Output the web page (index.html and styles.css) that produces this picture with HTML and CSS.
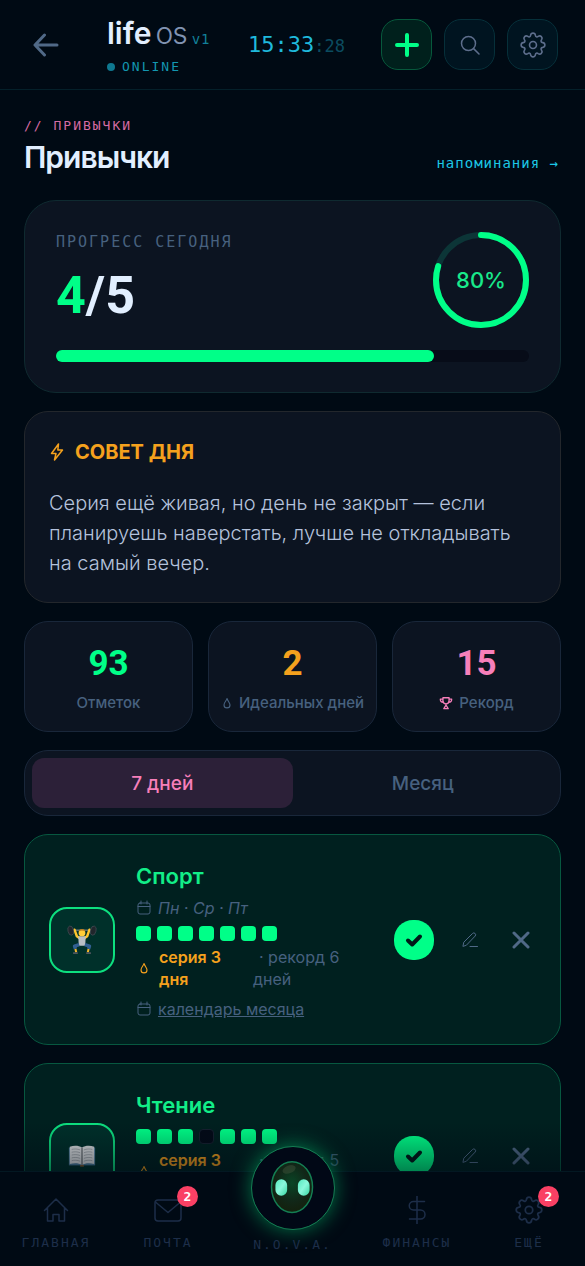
FILE: index.html
```html
<!DOCTYPE html>
<html lang="ru">
<head>
  <meta charset="UTF-8">
  <meta name="viewport" content="width=device-width, initial-scale=1.0">
  <title>life os - Привычки</title>
  <link rel="stylesheet" href="styles.css">
</head>
<body>
  <!-- Shared icons -->
  <svg class="sprite" aria-hidden="true">
    <symbol id="i-gear" viewBox="0 0 24 24">
      <path d="M9.800 3 C10.200 .4 13.800 .4 14.200 3 C14.400 4.600 15.600 5 16.800 4.100 C18.900 2.600 21.400 5.100 19.900 7.200 C19 8.400 19.400 9.600 21 9.800 C23.600 10.200 23.600 13.800 21 14.200 C19.400 14.400 19 15.600 19.900 16.800 C21.400 18.900 18.900 21.400 16.800 19.900 C15.600 19 14.400 19.400 14.200 21 C13.800 23.600 10.200 23.600 9.800 21 C9.600 19.400 8.400 19 7.200 19.900 C5.100 21.400 2.600 18.900 4.100 16.800 C5 15.600 4.600 14.400 3 14.200 C.4 13.800 .4 10.200 3 9.800 C4.600 9.600 5 8.400 4.100 7.200 C2.600 5.100 5.100 2.600 7.200 4.100 C8.400 5 9.600 4.600 9.800 3 Z"/>
      <circle cx="12" cy="12" r="3.200"/>
    </symbol>
    <symbol id="i-drop" viewBox="0 0 16 16">
      <path d="M8 2 C7.500 5 4 7 4 10.500 A4 4 0 0 0 12 10.500 C12 8 9 5.500 8 2 Z"/>
    </symbol>
    <symbol id="i-calendar" viewBox="0 0 16 16">
      <rect x="2" y="3" width="12" height="11" rx="2"/>
      <path d="M2 6.500h12M5 1v3M11 1v3"/>
    </symbol>
    <symbol id="i-pencil" viewBox="0 0 18 18">
      <path d="M2 15l.8-3.800L11.500 2.500a1.800 1.800 0 0 1 2.600 2.600L5.600 14zM9 15.500h7.500"/>
    </symbol>
    <symbol id="i-check" viewBox="0 0 18 18"><path d="M3 9.500l4.200 4L15 5.500"/></symbol>
    <symbol id="i-cross" viewBox="0 0 18 18"><path d="M2 2l14 14M16 2L2 16"/></symbol>
  </svg>

  <header class="topbar">
    <button class="back" aria-label="Назад">
      <svg class="icon" viewBox="0 0 26 26"><path d="M24 13H3M11.500 3L2 13l9.500 10"/></svg>
    </button>
    <div class="brand">
      <div class="brand-name"><b>life</b><span class="os">os</span><span class="version">v1</span></div>
      <div class="online">ONLINE</div>
    </div>
    <time class="clock">15:33<span>:28</span></time>
    <div class="tools">
      <button class="tool add" aria-label="Добавить">
        <svg class="icon" viewBox="0 0 24 24"><path d="M12 2v20M2 12h20"/></svg>
      </button>
      <button class="tool" aria-label="Поиск">
        <svg class="icon search-icon" viewBox="0 0 20 20"><circle cx="8.500" cy="8.500" r="7"/><path d="M13.600 13.600L19 19"/></svg>
      </button>
      <button class="tool" aria-label="Настройки">
        <svg class="icon"><use href="#i-gear"/></svg>
      </button>
    </div>
  </header>

  <main class="content">
    <div class="page-head">
      <div>
        <p class="kicker">// ПРИВЫЧКИ</p>
        <h1>Привычки</h1>
      </div>
      <a class="reminders" href="#reminders">напоминания →</a>
    </div>

    <section class="card progress">
      <div class="progress-top">
        <div>
          <p class="progress-label">ПРОГРЕСС СЕГОДНЯ</p>
          <p class="progress-count"><span>4</span>/5</p>
        </div>
        <div class="ring">
          <svg viewBox="0 0 96 96">
            <circle class="ring-track" cx="48" cy="48" r="45"/>
            <circle class="ring-value" cx="48" cy="48" r="45" pathLength="100"/>
          </svg>
          <span>80%</span>
        </div>
      </div>
      <div class="bar"><div class="bar-fill" style="width: 80%"></div></div>
    </section>

    <section class="card tip">
      <h2>
        <svg class="icon" viewBox="0 0 16 20"><path d="M9.500 2L2.500 11.500h4.500L5.500 18 13.500 8H8.800z"/></svg>
        СОВЕТ ДНЯ
      </h2>
      <p>Серия ещё живая, но день не закрыт — если планируешь наверстать, лучше не откладывать на самый вечер.</p>
    </section>

    <section class="stats">
      <div class="card stat green">
        <strong>93</strong>
        <p>Отметок</p>
      </div>
      <div class="card stat orange">
        <strong>2</strong>
        <p><svg class="icon"><use href="#i-drop"/></svg>Идеальных дней</p>
      </div>
      <div class="card stat pink">
        <strong>15</strong>
        <p><svg class="icon trophy" viewBox="0 0 16 16"><path d="M4.500 2h7v3.500a3.500 3.500 0 0 1-7 0zM4.500 3.500h-3c0 2.500 1 3.800 3.300 3.800M11.500 3.500h3c0 2.500-1 3.800-3.300 3.800M8 9v2M8 10.500L5.500 14.500h5z"/></svg>Рекорд</p>
      </div>
    </section>

    <div class="card tabs">
      <button class="tab active">7 дней</button>
      <button class="tab">Месяц</button>
    </div>

    <article class="card habit">
      <div class="habit-icon">
        <svg viewBox="0 0 32 32">
          <path d="M4 5.500h24" stroke="#7d8790" stroke-width="1.200"/>
          <path d="M8 5l2.500 7 3 2M24 5l-2.500 7-3 2" fill="none" stroke="#ffc52e" stroke-width="2.600" stroke-linecap="round" stroke-linejoin="round"/>
          <g fill="#20262c" stroke="#4d565e" stroke-width=".600">
            <ellipse cx="4" cy="6" rx="3" ry="5" transform="rotate(-14 4 6)"/>
            <ellipse cx="28" cy="6" rx="3" ry="5" transform="rotate(14 28 6)"/>
          </g>
          <path d="M12 12h8l-.6 10h-6.800z" fill="#b9bec4"/>
          <path d="M13 21l-5 1.500 1 3M19 21l5 1.500-1 3" fill="none" stroke="#315f91" stroke-width="3.600" stroke-linejoin="round"/>
          <path d="M9 25.500l.8 3.500M23 25.500l-.8 3.500" stroke="#f1b62b" stroke-width="2.200"/>
          <path d="M6.500 30h5M20.500 30h5" stroke="#4d565e" stroke-width="2"/>
          <circle cx="16" cy="8.500" r="3.600" fill="#ffcd39"/>
          <path d="M12.500 7c0-3.500 7-3.500 7 0-2-1.500-5-1.500-7 0z" fill="#b97a20"/>
        </svg>
      </div>
      <div class="habit-info">
        <h3>Спорт</h3>
        <p class="schedule"><svg class="icon"><use href="#i-calendar"/></svg><em>Пн · Ср · Пт</em></p>
        <div class="days"><i></i><i></i><i></i><i></i><i></i><i></i><i></i></div>
        <p class="streak">
          <svg class="icon"><use href="#i-drop"/></svg>
          <b>серия 3 дня</b>
          <span class="record">· рекорд 6 дней</span>
        </p>
        <p class="schedule"><svg class="icon"><use href="#i-calendar"/></svg><a href="#month">календарь месяца</a></p>
      </div>
      <div class="habit-actions">
        <button class="done" aria-label="Отметить"><svg class="icon"><use href="#i-check"/></svg></button>
        <button class="edit" aria-label="Изменить"><svg class="icon"><use href="#i-pencil"/></svg></button>
        <button class="remove" aria-label="Удалить"><svg class="icon"><use href="#i-cross"/></svg></button>
      </div>
    </article>

    <article class="card habit">
      <div class="habit-icon">
        <svg viewBox="0 0 32 32">
          <path d="M2 7h28v19H2z" fill="#4d7d9e"/>
          <path d="M3 6c5-1.500 10-1 13 1 3-2 8-2.500 13-1v18.500c-5-1.200-10-.8-13 1-3-1.800-8-2.200-13-1z" fill="#dfe1e3"/>
          <path d="M16 7v18.500" stroke="#6b7075" stroke-width="1.400"/>
          <path d="M5 9c3-.8 6-.6 9 .5M5 12c3-.8 6-.6 9 .5M5 15c3-.8 6-.6 9 .5M5 18c3-.8 6-.6 9 .5M5 21c3-.8 6-.6 9 .5M27 9c-3-.8-6-.6-9 .5M27 12c-3-.8-6-.6-9 .5M27 15c-3-.8-6-.6-9 .5M27 18c-3-.8-6-.6-9 .5M27 21c-3-.8-6-.6-9 .5" fill="none" stroke="#9a9fa4" stroke-width=".800"/>
          <path d="M14 26.500h4" stroke="#8a5a2c" stroke-width="1.600"/>
        </svg>
      </div>
      <div class="habit-info">
        <h3>Чтение</h3>
        <div class="days"><i></i><i></i><i></i><i class="missed"></i><i></i><i></i><i></i></div>
        <p class="streak">
          <svg class="icon"><use href="#i-drop"/></svg>
          <b>серия 3 дня</b>
          <span class="record">· рекорд 5 дней</span>
        </p>
        <p class="schedule"><svg class="icon"><use href="#i-calendar"/></svg><a href="#month">календарь месяца</a></p>
      </div>
      <div class="habit-actions">
        <button class="done" aria-label="Отметить"><svg class="icon"><use href="#i-check"/></svg></button>
        <button class="edit" aria-label="Изменить"><svg class="icon"><use href="#i-pencil"/></svg></button>
        <button class="remove" aria-label="Удалить"><svg class="icon"><use href="#i-cross"/></svg></button>
      </div>
    </article>
  </main>

  <nav class="bottom-nav">
    <a href="#home">
      <span class="nav-icon"><svg class="icon" viewBox="0 0 28 28"><path d="M2.500 14.500L14 3l11.500 11.500M5.500 12v13H11v-6.500h6V25h5.500V12"/></svg></span>
      ГЛАВНАЯ
    </a>
    <a href="#mail">
      <span class="nav-icon"><svg class="icon" viewBox="0 0 28 28"><rect x="1" y="4" width="26" height="21" rx="3"/><path d="M2 6.500l12 10L26 6.500"/></svg><span class="badge">2</span></span>
      ПОЧТА
    </a>
    <a class="nova" href="#nova">
      <span class="orb">
        <svg viewBox="0 0 84 84">
          <defs>
            <radialGradient id="face" cx=".5" cy=".42" r=".6">
              <stop offset="0" stop-color="#0a4526"/>
              <stop offset=".6" stop-color="#112718"/>
              <stop offset="1" stop-color="#14200c"/>
            </radialGradient>
            <linearGradient id="eye" x1="0" y1="0" x2="1" y2="1">
              <stop offset="0" stop-color="#55e8bd"/>
              <stop offset=".5" stop-color="#8bf8dc"/>
              <stop offset="1" stop-color="#36d6a0"/>
            </linearGradient>
          </defs>
          <ellipse cx="41" cy="41" rx="21" ry="26" fill="url(#face)" stroke="#147e53" stroke-width="1.500"/>
          <ellipse cx="38" cy="23" rx="7" ry="4" fill="#4b5940" opacity=".4" transform="rotate(-20 38 23)"/>
          <rect x="24" y="33" width="12" height="17" rx="6" fill="url(#eye)"/>
          <rect x="47" y="33" width="12" height="17" rx="6" fill="url(#eye)"/>
        </svg>
      </span>
      N.O.V.A.
    </a>
    <a href="#finance">
      <span class="nav-icon"><svg class="icon" viewBox="0 0 28 28"><path d="M14 0v28M21.500 5.500H10.500a4.200 4.200 0 0 0 0 8.500h7a4.500 4.500 0 0 1 0 9H6.500"/></svg></span>
      ФИНАНСЫ
    </a>
    <a href="#more">
      <span class="nav-icon"><svg class="icon"><use href="#i-gear"/></svg><span class="badge">2</span></span>
      ЕЩЁ
    </a>
  </nav>
</body>
</html>
```

FILE: styles.css
```css
:root {
  --bg: #000a14;
  --card: #0c1421;
  --green: #00ff88;
  --orange: #f5a11d;
  --pink: #f77fba;
  --muted: #47617f;
  --light: #e2efff;
  --sans: Inter, "Noto Sans", sans-serif;
  --mono: "DejaVu Sans Mono", monospace;
}
* {
  box-sizing: border-box;
}
body {
  margin: 0;
  height: 100vh;
  display: flex;
  flex-direction: column;
  overflow: hidden;
  background: var(--bg);
  color: var(--light);
  font-family: var(--sans);
}
h1, h2, h3, p {
  margin: 0;
}
button {
  padding: 0;
  border: none;
  background: none;
  font-family: inherit;
  cursor: pointer;
}
a {
  color: inherit;
}
.sprite {
  display: none;
}
.icon {
  display: block;
  flex: none;
  fill: none;
  stroke: currentColor;
  stroke-width: 1.5;
  stroke-linecap: round;
  stroke-linejoin: round;
}

/* Top bar */
.topbar {
  flex: none;
  display: flex;
  align-items: center;
  height: 90px;
  padding: 0 27px 0 24px;
  border-bottom: 1px solid #04202a;
}
.back {
  display: grid;
  place-items: center;
  width: 44px;
  height: 44px;
  color: #506987;
}
.back .icon {
  width: 26px;
  height: 26px;
  stroke-width: 3;
}
.brand {
  margin-left: 39px;
}
.brand-name {
  display: flex;
  align-items: baseline;
  font-size: 30px;
  line-height: 38px;
}
.brand-name b {
  font-weight: 600;
}
.os {
  margin-left: 4px;
  color: #8193b1;
  font-weight: 300;
  letter-spacing: -1px;
}
.version {
  margin-left: 5px;
  color: #12809a;
  font-family: var(--mono);
  font-size: 14px;
  letter-spacing: 1px;
}
.online {
  display: flex;
  align-items: center;
  gap: 7px;
  color: #1397b0;
  font-family: var(--mono);
  font-size: 13px;
  line-height: 18px;
  letter-spacing: 2px;
}
.online::before {
  content: "";
  width: 8px;
  height: 8px;
  border-radius: 50%;
  background: #0e7890;
}
.clock {
  margin: 0 36px 0 auto;
  color: #1fb9dc;
  font-family: var(--mono);
  font-size: 22px;
  white-space: nowrap;
}
.clock span {
  color: #0b4c60;
  font-size: 17px;
}
.tools {
  display: flex;
  gap: 12px;
}
.tool {
  display: grid;
  place-items: center;
  width: 51px;
  height: 51px;
  border: 1px solid #06303a;
  border-radius: 17px;
  background: #001420;
  color: #5d6e8c;
}
.tool .icon {
  width: 26px;
  height: 26px;
}
.tool .search-icon {
  width: 20px;
  height: 20px;
}
.add {
  border-color: #07593c;
  background: #00201c;
  color: var(--green);
}
.add .icon {
  width: 24px;
  height: 24px;
  stroke-width: 4;
}

/* Page */
.content {
  flex: 1;
  min-height: 0;
  padding: 27px 24px 0;
  overflow-y: auto;
  scrollbar-width: none;
}
.page-head {
  display: flex;
  justify-content: space-between;
  align-items: flex-end;
  margin-bottom: 21px;
}
.kicker {
  color: #d56ba3;
  font-family: var(--mono);
  font-size: 13px;
  line-height: 18px;
  letter-spacing: 2px;
}
h1 {
  font-size: 30px;
  font-weight: 600;
  line-height: 44px;
  letter-spacing: -1px;
}
.reminders {
  margin: 0 2px 6px 0;
  color: #1cc8e6;
  font-family: var(--mono);
  font-size: 14px;
  line-height: 20px;
  letter-spacing: 1px;
  text-decoration: none;
}
.card {
  margin-bottom: 18px;
  border: 1px solid #19273a;
  border-radius: 24px;
  background: var(--card);
}

/* Progress */
.progress {
  padding: 31px 31px 30px;
  border-color: #0f2a30;
  border-radius: 32px;
}
.progress-top {
  display: flex;
  justify-content: space-between;
  margin-bottom: 22px;
}
.progress-label {
  color: var(--muted);
  font-family: var(--mono);
  font-size: 15px;
  line-height: 20px;
  letter-spacing: 2px;
}
.progress-count {
  margin-top: 14px;
  font-family: Roboto, sans-serif;
  font-size: 52px;
  font-weight: 700;
  line-height: 60px;
}
.progress-count span {
  color: var(--green);
}
.ring {
  display: grid;
  width: 96px;
  height: 96px;
}
.ring svg, .ring span {
  grid-area: 1 / 1;
}
.ring span {
  place-self: center;
  color: #18e98b;
  font-size: 22px;
  font-weight: 500;
}
.ring circle {
  fill: none;
  stroke-width: 6;
}
.ring-track {
  stroke: #0c3537;
}
.ring-value {
  stroke: var(--green);
  stroke-linecap: round;
  stroke-dasharray: 80 100;
  transform: rotate(-90deg);
  transform-origin: center;
}
.bar {
  height: 12px;
  border-radius: 6px;
  background: #070c18;
}
.bar-fill {
  height: 100%;
  border-radius: 6px;
  background: var(--green);
}

/* Tip */
.tip {
  padding: 24px;
  border-color: #23272c;
}
.tip h2 {
  display: flex;
  align-items: center;
  gap: 10px;
  color: var(--orange);
  font-size: 20px;
  font-weight: 700;
  line-height: 32px;
}
.tip h2 .icon {
  width: 16px;
  height: 20px;
}
.tip p {
  margin-top: 20px;
  color: #b4c2dc;
  font-size: 20px;
  font-weight: 300;
  line-height: 30px;
}

/* Stats */
.stats {
  display: grid;
  grid-template-columns: repeat(3, 1fr);
  gap: 15px;
  margin-bottom: 18px;
}
.stat {
  margin: 0;
  padding: 22px 4px 16px;
  text-align: center;
}
.stat strong {
  display: block;
  font-family: Roboto, sans-serif;
  font-size: 35px;
  line-height: 40px;
}
.stat p {
  display: flex;
  justify-content: center;
  align-items: center;
  gap: 6px;
  margin-top: 7px;
  color: var(--muted);
  font-size: 15px;
  font-weight: 500;
  line-height: 24px;
  white-space: nowrap;
}
.stat .icon {
  width: 12px;
  height: 12px;
}
.stat .trophy {
  width: 14px;
  height: 14px;
  color: var(--pink);
}
.green strong {
  color: var(--green);
}
.orange strong {
  color: var(--orange);
}
.pink strong {
  color: var(--pink);
}

/* Period tabs */
.tabs {
  display: grid;
  grid-template-columns: 1fr 1fr;
  padding: 7px;
}
.tab {
  height: 50px;
  border-radius: 12px;
  color: var(--muted);
  font-size: 19px;
  font-weight: 500;
}
.active {
  background: #2c2038;
  color: var(--pink);
}

/* Habits */
.habit {
  display: flex;
  align-items: center;
  padding: 24px;
  border-color: #075840;
  background: #00201f;
}
.habit-icon {
  flex: none;
  display: grid;
  place-items: center;
  width: 66px;
  height: 66px;
  border: 2px solid #0ddf7f;
  border-radius: 18px;
  background: #00302a;
}
.habit-icon svg {
  width: 30px;
  height: 30px;
}
.habit-info {
  flex: 1;
  margin-left: 21px;
  color: var(--muted);
  font-size: 16px;
  line-height: 22px;
}
.habit h3 {
  color: #12ee88;
  font-size: 22px;
  font-weight: 600;
  line-height: 34px;
}
.schedule {
  display: flex;
  align-items: center;
  gap: 6px;
  margin-top: 4px;
}
.schedule .icon {
  width: 16px;
  height: 16px;
  stroke-width: 1;
}
.days {
  display: flex;
  gap: 6px;
  margin: 7px 0 5px;
}
.days i {
  width: 15px;
  height: 15px;
  border-radius: 4px;
  background: var(--green);
}
.days .missed {
  border: 1px solid #16202f;
  background: #030a17;
}
.streak {
  display: flex;
  align-items: center;
  margin-bottom: 8px;
}
.streak .icon {
  width: 12px;
  height: 12px;
  margin: 0 9px 0 2px;
  color: var(--orange);
}
.streak b {
  width: 76px;
  margin-right: 18px;
  color: var(--orange);
  font-weight: 600;
}
.record {
  width: 100px;
  text-indent: 6px;
}
.habit-actions {
  display: flex;
  align-items: center;
  gap: 12px;
  margin-right: -4px;
}
.habit-actions button {
  display: grid;
  place-items: center;
  width: 39px;
  height: 40px;
  color: #506987;
}
.habit-actions .icon {
  width: 18px;
  height: 18px;
}
.habit-actions .edit .icon {
  stroke-width: 1;
}
.habit-actions .done {
  width: 40px;
  margin-right: 4px;
  border-radius: 19px;
  background: var(--green);
  color: #001a18;
}
.done .icon {
  stroke-width: 4;
}
.remove .icon {
  stroke-width: 3;
}

/* Bottom navigation */
.bottom-nav {
  position: relative;
  flex: none;
  display: grid;
  grid-template-columns: 1fr 1fr 137px 1fr 1fr;
  height: 95px;
  border-top: 1px solid #052630;
  background: var(--bg);
}
/* fades the list out above the bar */
.bottom-nav::before {
  content: "";
  position: absolute;
  inset: -50px 0 100%;
  background: linear-gradient(transparent, rgba(0, 10, 20, 0.5));
  pointer-events: none;
}
.bottom-nav a {
  display: flex;
  flex-direction: column;
  align-items: center;
  padding-top: 24px;
  color: #1d2e49;
  font-family: var(--mono);
  font-size: 13px;
  line-height: 18px;
  letter-spacing: 2px;
  text-decoration: none;
}
.nav-icon {
  position: relative;
  width: 28px;
  height: 28px;
  margin-bottom: 10px;
}
.nav-icon .icon {
  width: 28px;
  height: 28px;
}
.badge {
  position: absolute;
  top: -10px;
  right: -16px;
  width: 21px;
  height: 21px;
  border-radius: 50%;
  background: #fa4064;
  color: #ffffff;
  font-size: 13px;
  font-weight: 700;
  line-height: 21px;
  letter-spacing: 0;
  text-align: center;
}
.bottom-nav .nova {
  z-index: 1;
  padding-top: 0;
}
.orb {
  width: 84px;
  height: 84px;
  margin: -26px 0 6px;
  border: 1px solid #147e53;
  border-radius: 50%;
  background: #010816;
  box-shadow: 0 0 20px rgba(0, 220, 120, 0.5);
}
.orb svg {
  display: block;
}
```
